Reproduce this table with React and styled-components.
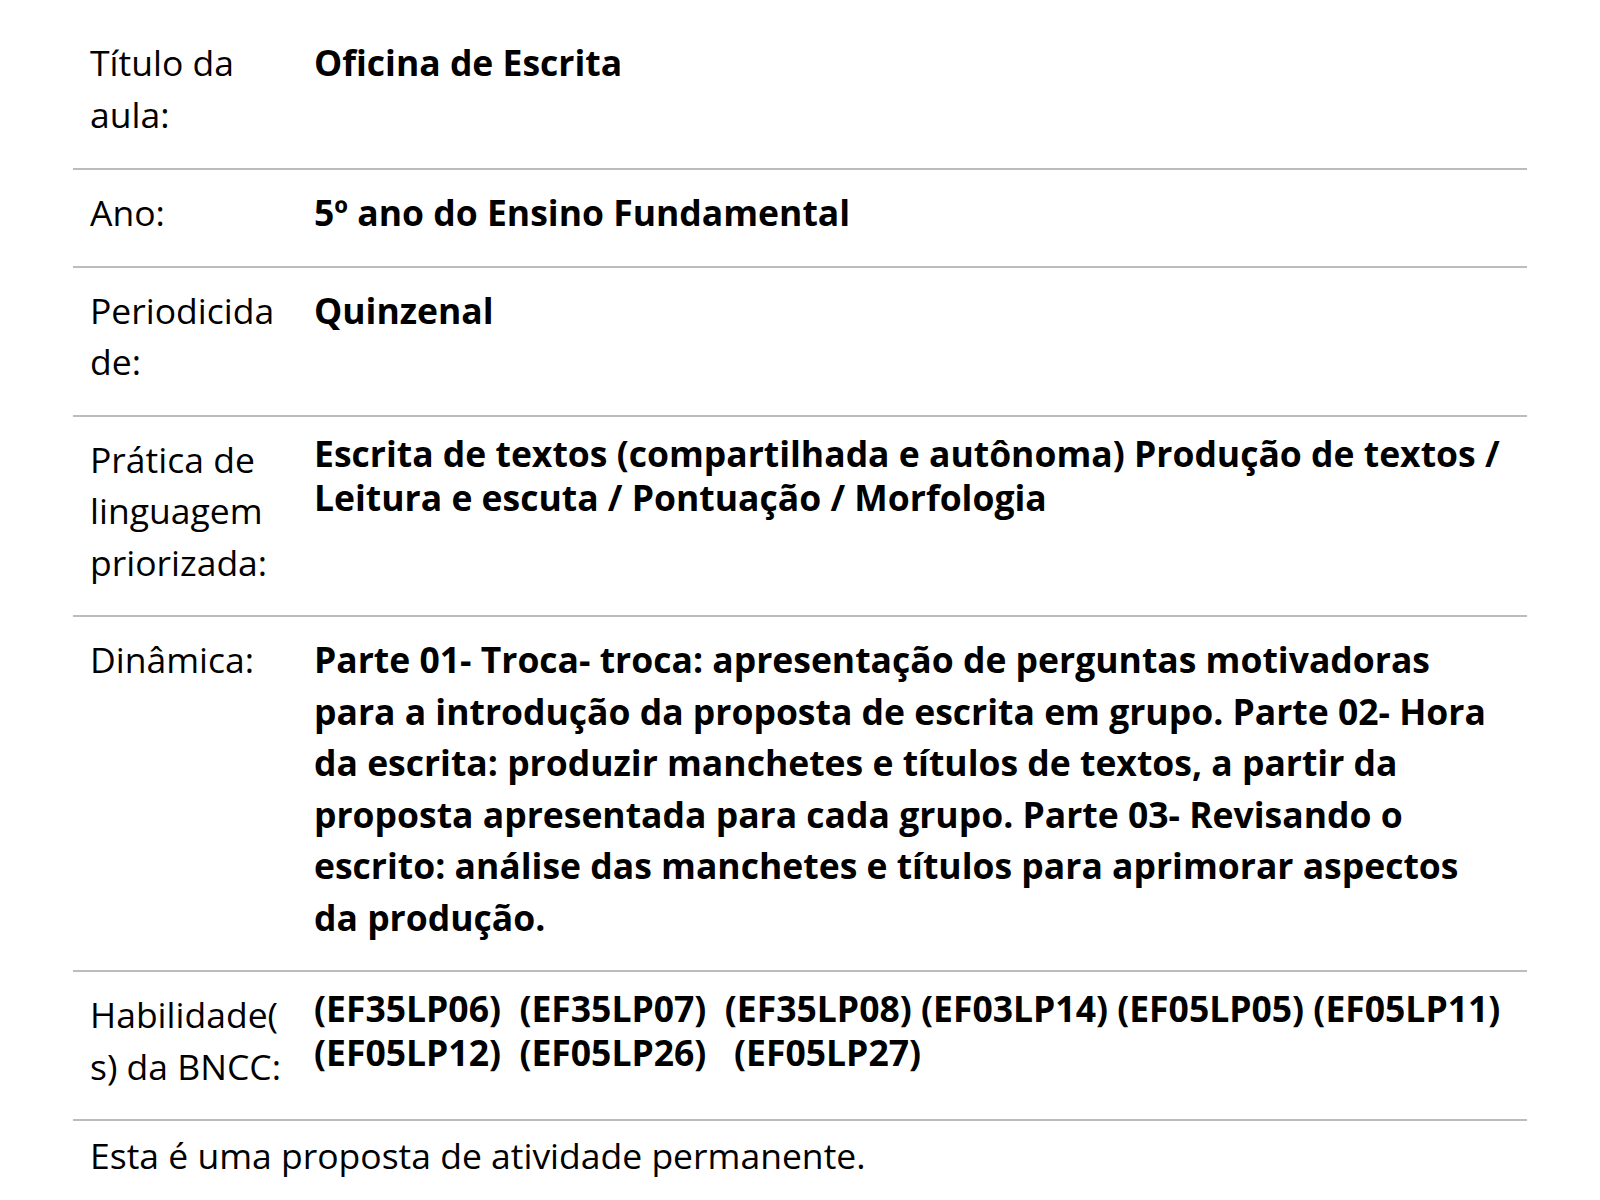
import React from "react";
import styled, { createGlobalStyle } from "styled-components";

const GlobalStyle = createGlobalStyle`
  html, body {
    margin: 0;
    padding: 0;
    background: #ffffff;
  }
  body {
    font-family: "Open Sans", "Noto Sans", "DejaVu Sans", sans-serif;
    color: #000000;
    -webkit-font-smoothing: antialiased;
  }
`;

const Page = styled.main`
  width: 1454px;
  margin: 0 auto;
  padding-top: 18px;
`;

const Table = styled.section`
  display: flex;
  flex-direction: column;
`;

const Row = styled.div`
  display: grid;
  grid-template-columns: 229px 1fr;
  border-top: ${(p) => (p.$first ? "none" : "2px solid #bcbcbc")};
  padding-top: ${(p) => (p.$first ? "19px" : "17px")};
  padding-bottom: ${(p) => (p.$first ? "28px" : "27px")};
`;

const Label = styled.div`
  padding: 0 12px 0 17px;
  font-size: 35.5px;
  font-weight: 400;
  line-height: 51.5px;
  overflow-wrap: anywhere;
`;

const Value = styled.div`
  padding: 0 17px 0 12px;
  font-size: 35.5px;
  font-weight: 700;
  line-height: ${(p) => (p.$tight ? "44px" : "51.5px")};
  margin-top: ${(p) => (p.$tight ? "-3px" : "0")};
  white-space: pre-wrap;
`;

const Footer = styled.p`
  margin: 0;
  border-top: 2px solid #bcbcbc;
  padding: 9px 17px 0;
  font-size: 35.5px;
  line-height: 51.5px;
  font-weight: 400;
`;

const rows = [
  { label: "Título da aula:", value: "Oficina de Escrita" },
  { label: "Ano:", value: "5º ano do Ensino Fundamental" },
  { label: "Periodicidade:", value: "Quinzenal" },
  {
    label: "Prática de linguagem priorizada:",
    value:
      "Escrita de textos (compartilhada e autônoma) Produção de textos / Leitura e escuta / Pontuação / Morfologia",
    tight: true,
  },
  {
    label: "Dinâmica:",
    value:
      "Parte 01- Troca- troca: apresentação de perguntas motivadoras para a introdução da proposta de escrita em grupo. Parte 02- Hora da escrita: produzir manchetes e títulos de textos, a partir da proposta apresentada para cada grupo. Parte 03- Revisando o escrito: análise das manchetes e títulos para aprimorar aspectos da produção.",
  },
  {
    label: "Habilidade(s) da BNCC:",
    value:
      "(EF35LP06)  (EF35LP07)  (EF35LP08) (EF03LP14) (EF05LP05) (EF05LP11) (EF05LP12)  (EF05LP26)   (EF05LP27)",
    tight: true,
  },
];

export default function App() {
  return (
    <>
      <GlobalStyle />
      <Page>
        <Table>
          {rows.map((r, i) => (
            <Row key={r.label} $first={i === 0}>
              <Label>{r.label}</Label>
              <Value $tight={r.tight}>{r.value}</Value>
            </Row>
          ))}
        </Table>
        <Footer>Esta é uma proposta de atividade permanente.</Footer>
      </Page>
    </>
  );
}
